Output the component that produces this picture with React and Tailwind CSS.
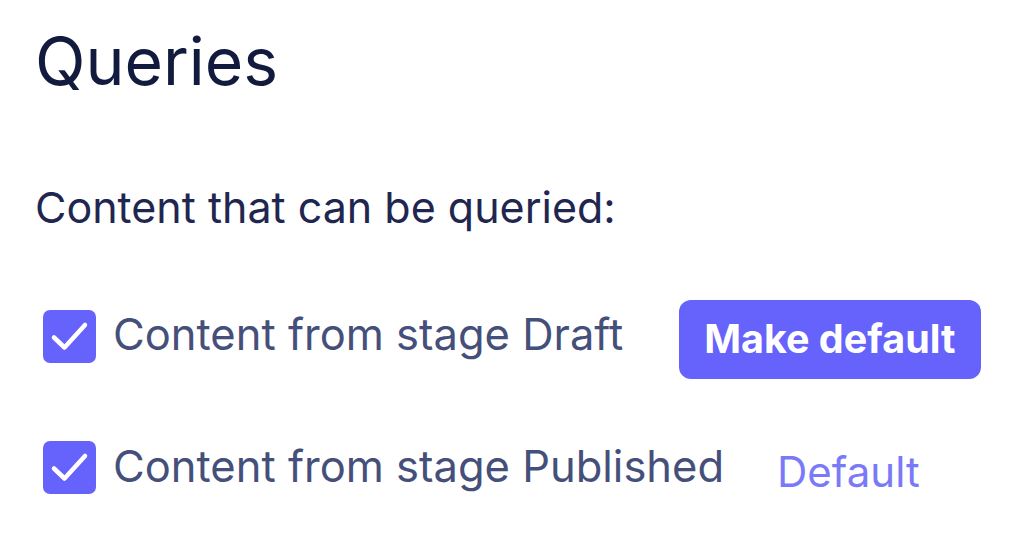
const rows = [
  { label: "Content from stage Draft", isDefault: false },
  { label: "Content from stage Published", isDefault: true },
];

function CheckBox() {
  return (
    <span className="inline-flex h-[53px] w-[53px] shrink-0 items-center justify-center rounded-[7px] bg-[#6563fb]">
      <svg width="53" height="53" viewBox="0 0 53 53" fill="none">
        <path d="M11 27.5 L21.5 37.5 L42 15" stroke="white" strokeWidth="4.5" strokeLinecap="round" strokeLinejoin="round" />
      </svg>
    </span>
  );
}

export default function App() {
  return (
    <div className="min-h-[543px] w-[1024px] bg-white pl-[35px] pt-[21px] font-['Inter',sans-serif]">
      <h1 className="text-[66px] leading-[80px] font-normal text-[#121a3e]">Queries</h1>

      <p className="mt-[80px] text-[43px] leading-[52px] text-[#1f2750]">Content that can be queried:</p>

      <div className="mt-[67px] flex h-[79px] items-start pl-[8px]">
        <div className="mt-[10px]">
          <CheckBox />
        </div>
        <span className="ml-[17px] mt-[8px] text-[43.5px] leading-[52px] text-[#45507a]">{rows[0].label}</span>
        <button className="ml-[56px] h-[79px] rounded-[12px] bg-[#6563fb] px-[25px] text-[39.5px] font-bold leading-none text-white">
          Make default
        </button>
      </div>

      <div className="mt-[62px] flex items-start pl-[8px]">
        <CheckBox />
        <span className="ml-[17px] mt-[-1px] text-[43.5px] leading-[52px] text-[#45507a]">{rows[1].label}</span>
        <span className="ml-[53px] mt-[6px] text-[42px] leading-[50px] text-[#7a7af8]">Default</span>
      </div>
    </div>
  );
}
